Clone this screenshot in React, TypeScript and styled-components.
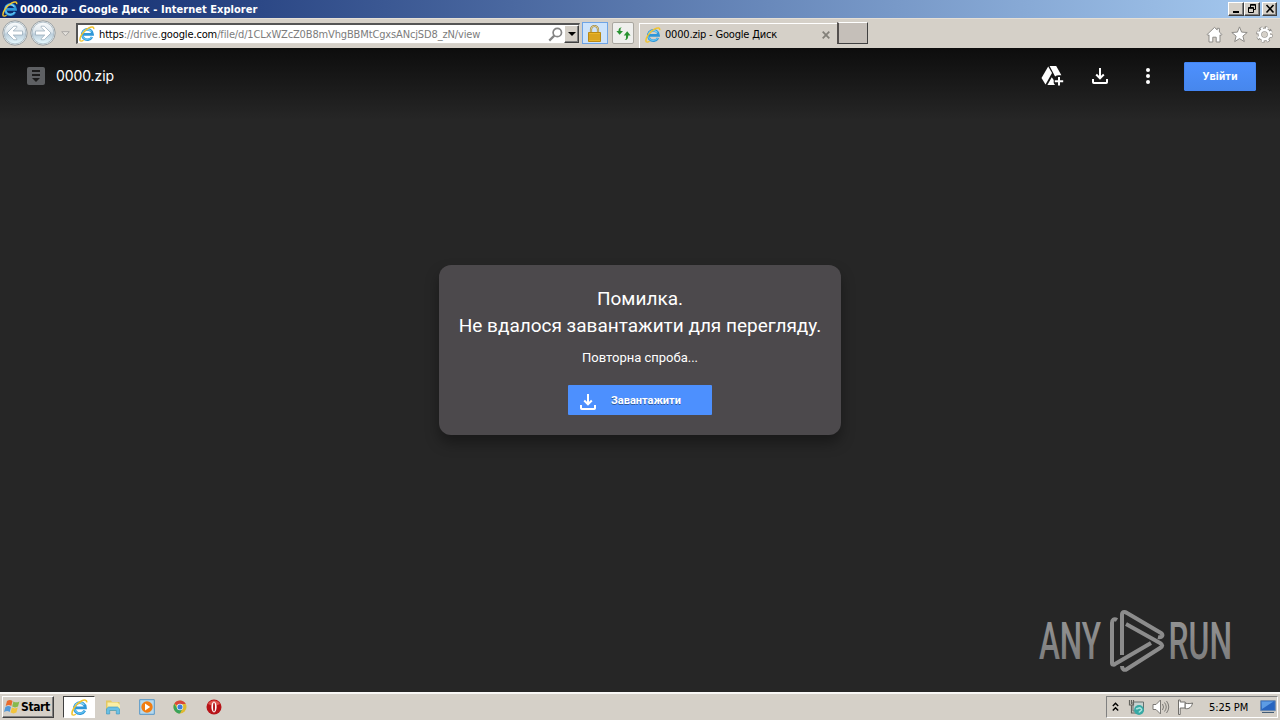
import * as React from 'react';
import styled, { createGlobalStyle, css } from 'styled-components';

const tahoma = `'DejaVu Sans Condensed', 'DejaVu Sans', sans-serif`;

const colors = {
    face: '#d5d0c8',
    white: '#ffffff',
    shadow: '#808080',
    dark: '#404040',
    page: '#262626',
    blue: '#4d90fe',
};

interface IconProps {
    size?: number;
}

const IeIcon = ({ size = 16 }: IconProps) => (
    <Icon width={size} height={size} viewBox="0 0 16 16" fill="none">
        <path d="M13 11a5.2 5.2 0 1 1 .6-2.6H4.5" stroke="#2f97d8" strokeWidth="2.6" />
        <path d="M12.7 11a5 5 0 0 1-9.2-1.6" stroke="#62c3f2" strokeWidth="1.2" />
        <path d="M3.6 7a5 5 0 0 1 8.8-1.4" stroke="#86d6f7" strokeWidth="1.2" />
        <path d="M1.4 15C-.4 12.6 3.8 5 9.8 1.9c3.2-1.6 5.3-1 4.9 1.3" stroke="#f2c42e" strokeWidth="1.5" />
        <path d="M1.4 14.9c.9.4 2 .1 3.2-.6" stroke="#f2c42e" strokeWidth="1.2" />
    </Icon>
);

const DownloadIcon = () => (
    <Icon width="18" height="18" viewBox="0 0 18 18" fill="none" stroke="#fff" strokeWidth="2">
        <path d="M9 1v10M5.2 7.5 9 11.3l3.8-3.8M2 12v3.2c0 .5.3.8.8.8h12.4c.5 0 .8-.3.8-.8V12" />
    </Icon>
);

const ArrowCircle = ({ flip }: { flip?: boolean }) => (
    <Icon width="28" height="28" viewBox="0 0 28 28">
        <defs>
            <linearGradient id={flip ? 'forward' : 'back'} x1="0" y1="0" x2="0" y2="1">
                <stop offset="0" stopColor="#fafcfd" />
                <stop offset=".45" stopColor="#dde6ec" />
                <stop offset=".55" stopColor="#bccedb" />
                <stop offset="1" stopColor="#e7faff" />
            </linearGradient>
        </defs>
        <circle cx="14" cy="14" r="12.2" fill="#eef0ef" stroke="#8e969b" strokeWidth=".9" />
        <circle cx="14" cy="14" r="10.9" fill={`url(#${flip ? 'forward' : 'back'})`} stroke="#a3b5c0" strokeWidth=".8" />
        <g transform={flip ? 'translate(28 0) scale(-1 1)' : undefined}>
            <path d="M6 14l6.8-6.8h3v1.2L12.2 12H21.5v4h-9.3l3.6 3.6v1.2h-3z" fill="#fff" stroke="#93a8b6" strokeWidth=".7" />
        </g>
    </Icon>
);

const DriveIcon = () => (
    <Icon width="24" height="22" viewBox="0 0 24 22" fill="#fff">
        <path d="M8.2 1.5 12 8 5.5 19.5 1.5 13z" />
        <path d="M9.6 1h6.6l5.2 9.2h-2.4a6 6 0 0 0-3.9 1.2z" />
        <path d="m11.8 12.2 1.9 2.9v2.9l1.3 2H7.4z" />
        <path d="M18 12h2v3.2h3.2v2H20v3.2h-2v-3.2h-3.2v-2H18z" />
    </Icon>
);

const WindowButtons = () => (
    <WindowControls>
        <CaptionButton>
            <Icon width="12" height="10" viewBox="0 0 12 10"><path d="M3 7h6v2H3z" /></Icon>
        </CaptionButton>
        <CaptionButton>
            <Icon width="12" height="10" viewBox="0 0 12 10" fill="none" stroke="#000">
                <path d="M4.5 3V.5h5v5H7M4 1.2h6M2.5 3.5h5v5h-5zM2 4.3h6" />
            </Icon>
        </CaptionButton>
        <CaptionButton gap>
            <Icon width="12" height="10" viewBox="0 0 12 10" fill="none" stroke="#000" strokeWidth="1.6">
                <path d="m2.5 1 7 7.5m0-7.5-7 7.5" />
            </Icon>
        </CaptionButton>
    </WindowControls>
);

const BrowserBar = () => (
    <Toolbar>
        <NavButtons>
            <ArrowCircle />
            <ArrowCircle flip />
        </NavButtons>
        <HistoryArrow>
            <Icon width="9" height="6" viewBox="0 0 9 6"><path d="M.7.7h7.6L4.5 4.8z" fill="#e5e2dd" stroke="#aaa8a5" /></Icon>
        </HistoryArrow>
        <AddressBar>
            <IeIcon />
            <Url>
                <b>https</b>://drive.<b>google.com</b>/file/d/1CLxWZcZ0B8mVhgBBMtCgxsANcjSD8_zN/view
            </Url>
            <Icon width="15" height="15" viewBox="0 0 15 15" fill="none" stroke="#858585">
                <circle cx="9.3" cy="5.5" r="4.2" strokeWidth="1.7" /><path d="m6.3 8.6-5 5" strokeWidth="2.2" />
            </Icon>
            <DropButton><Icon width="8" height="4" viewBox="0 0 8 4"><path d="M0 0h8L4 4z" /></Icon></DropButton>
        </AddressBar>
        <LockButton>
            <Icon width="15" height="17" viewBox="0 0 15 17">
                <path d="M4 8V4.5a3.5 3.5 0 0 1 7 0V8" fill="none" stroke="#a28a45" strokeWidth="2.2" />
                <path d="M4 8V4.5a3.5 3.5 0 0 1 7 0V8" fill="none" stroke="#eadca5" strokeWidth=".8" />
                <path d="M1.5 7.5h12v9h-12z" fill="#eab528" stroke="#b98916" />
                <path d="M2 10h11M2 12h11M2 14h11" stroke="#c38e15" strokeWidth=".8" />
            </Icon>
        </LockButton>
        <RefreshButton>
            <Icon width="15" height="15" viewBox="0 0 15 15" fill="#299332">
                <path d="M6 1.5C4.2 1.9 4.6 3 4.5 5H7L3.6 8.8.4 5h2.1C2.4 2.8 3.4 1.2 6 1.5z" />
                <path d="M8.5 14c1.8-.4 1.4-1.5 1.5-3.5V9.5H7.7l3.5-4.2 3.4 4.2h-2.4c.1 2.7-.9 4.8-3.7 4.5z" />
            </Icon>
        </RefreshButton>
        <Tab>
            <IeIcon />
            <TabTitle>0000.zip - Google Диск</TabTitle>
            <Icon width="8" height="8" viewBox="0 0 8 8"><path d="m.7.7 6.6 6.6m0-6.6L.7 7.3" stroke="#838079" strokeWidth="1.8" /></Icon>
        </Tab>
        <NewTab />
        <Tools>
            <Icon width="17" height="17" viewBox="0 0 17 17" fill="#fff" stroke="#8d8b87" strokeWidth="1">
                <path d="m1 8.6 7.5-7.2 2.7 2.5V2.3h2.2v3.8L16 8.6l-1 1-1-.8V16h-3.8v-4.8H6.8V16H3V8.8l-1 .8z" />
            </Icon>
            <Icon width="17" height="17" viewBox="0 0 17 17" fill="#fff" stroke="#8d8b87" strokeWidth="1">
                <path d="m8.5.9 2.1 5.2 5.6.4-4.3 3.6 1.4 5.5-4.8-3-4.8 3 1.4-5.5L.8 6.5l5.6-.4z" />
            </Icon>
            <Icon width="17" height="17" viewBox="0 0 17 17" fill="none">
                <circle cx="8.5" cy="8.5" r="6.6" stroke="#8d8b87" strokeWidth="3.4" strokeDasharray="3.1 2.08" />
                <circle cx="8.5" cy="8.5" r="4.7" stroke="#8d8b87" strokeWidth="4" />
                <circle cx="8.5" cy="8.5" r="6.4" stroke="#fff" strokeWidth="2.6" strokeDasharray="2 3.03" strokeDashoffset="-.55" />
                <circle cx="8.5" cy="8.5" r="4.6" stroke="#fff" strokeWidth="2.7" />
            </Icon>
        </Tools>
    </Toolbar>
);

const Watermark = () => (
    <WatermarkSvg width="200" height="64" viewBox="0 0 200 64">
        <defs>
            <linearGradient id="silver" x1="0" y1="0" x2="0" y2="1">
                <stop offset="0" stopColor="#989898" />
                <stop offset="1" stopColor="#777" />
            </linearGradient>
        </defs>
        <g fill="url(#silver)" fontFamily="Roboto, sans-serif" fontSize="52" fontWeight="500">
            <text x="1" y="50" textLength="62" lengthAdjust="spacingAndGlyphs">ANY</text>
            <text x="130.5" y="50" textLength="63.5" lengthAdjust="spacingAndGlyphs">RUN</text>
        </g>
        <g fill="none" stroke="#8c8c8c" strokeWidth="4" strokeLinejoin="round">
            <path d="M79 11c-3-2-5 0-5 3v40c0 2 2 2 3 1l36-21" />
            <path d="M84 46V6c0-3 2-4 5-2l34 20c3 2 1 5-3 4" />
            <path d="m88 15 34 19c3 2 3 3 0 5L89 60c-3 2-5 0-5-3" />
        </g>
    </WatermarkSvg>
);

const TaskIcons = () => (
    <React.Fragment>
        <TaskButton active><IeIcon size={17} /></TaskButton>
        <TaskButton>
            <Icon width="16" height="16" viewBox="0 0 16 16">
                <path d="M1 1.5h5l1 1.5h7.5v9H1z" fill="#e3c862" /><path d="M2.5 3.5h10l2.5 2.5v5H2.5z" fill="#fbeea5" />
                <path d="M1.5 15V9.8l2-1.8h9l2 1.8V15h-3.2v-3.5H4.7V15z" fill="#69bfe5" stroke="#3995bd" strokeWidth=".6" />
            </Icon>
        </TaskButton>
        <TaskButton>
            <Icon width="16" height="16" viewBox="0 0 16 16">
                <path d="M.7.7h14.6v14.6H.7z" fill="#b6d9ee" stroke="#5597c8" />
                <circle cx="8" cy="8" r="5.7" fill="#f17d12" /><path d="m6 4.4 5.2 3.6L6 11.6z" fill="#fff" />
            </Icon>
        </TaskButton>
        <TaskButton>
            <Icon width="14" height="14" viewBox="0 0 14 14">
                <circle cx="7" cy="7" r="6.5" fill="#e0b92f" />
                <path d="M7 7 1.3 3.8A6.6 6.6 0 0 1 12.8 4H7z" fill="#d8463b" />
                <path d="M1.3 3.8A6.5 6.5 0 0 0 7 13.5L9.5 8.6 4.2 8.5z" fill="#3aa35a" />
                <circle cx="7" cy="7" r="3.2" fill="#e9eef2" /><circle cx="7" cy="7" r="2.5" fill="#3b7fdb" />
            </Icon>
        </TaskButton>
        <TaskButton>
            <Icon width="16" height="16" viewBox="0 0 16 16">
                <circle cx="8" cy="8" r="7.5" fill="#b71318" /><path d="M2 5a7 7 0 0 1 12 0 12 12 0 0 1-12 0" fill="#e0544e" />
                <ellipse cx="8" cy="8" rx="2.6" ry="5.4" fill="#fff" /><ellipse cx="8" cy="8" rx="1" ry="4.5" fill="#b71b20" />
            </Icon>
        </TaskButton>
    </React.Fragment>
);

const SystemTray = () => (
    <Tray>
        <Icon width="7" height="10" viewBox="0 0 7 10" fill="none" stroke="#000" strokeWidth="1.4"><path d="m.8 4 2.7-2.7L6.2 4M.8 8.5l2.7-2.7 2.7 2.7" /></Icon>
        <Icon width="17" height="17" viewBox="0 0 17 17" fill="none">
            <path d="M5 3h10.5v9H5z" fill="#c6d3d1" stroke="#66716f" /><path d="M1.5 1v5h4V1M3.5 1v4M3.5 6v8H8" stroke="#64645f" strokeWidth="1.2" />
            <circle cx="11" cy="11" r="4.9" fill="#37a9a4" /><path d="M8 9.5c2 1 3-2 5 0s-1 2-2 4" stroke="#a9e3de" strokeWidth="1.5" />
        </Icon>
        <Icon width="18" height="16" viewBox="0 0 18 16" fill="none" stroke="#7b7975">
            <path d="M1 5.5h3L8.5 1v14L4 10.5H1z" fill="#fff" /><path d="M10.5 5q2 3 0 6M12.5 3.5q3.5 4.5 0 9M14.5 2q4.5 6 0 12" />
        </Icon>
        <Icon width="17" height="16" viewBox="0 0 17 16" fill="#fff" stroke="#706e6a">
            <path d="M1.5 1v14.5h1.7V9h5V3h-5V1z" /><path d="M8.2 4.2c3 .6 5 .5 7.4-.2-1 4-3.5 6.3-7.4 5.6z" />
        </Icon>
        <Clock>5:25 PM</Clock>
        <Icon width="16" height="14" viewBox="0 0 16 14">
            <path d="M.7.7h14.6v10H.7z" fill="#2765c0" stroke="#6d8aae" /><path d="M1.5 1.5h12L2 9z" fill="#5c9ce4" /><path d="M2 12.5h12" stroke="#435c75" />
        </Icon>
    </Tray>
);

export default function App() {
    return (
        <Desktop>
            <GlobalStyle />
            <TitleBar>
                <IeIcon />
                <WindowTitle>0000.zip - Google Диск - Internet Explorer</WindowTitle>
                <WindowButtons />
            </TitleBar>
            <BrowserBar />
            <Viewer>
                <ViewerHeader>
                    <Icon width="18" height="18" viewBox="0 0 18 18">
                        <rect width="18" height="18" rx="2" fill="#5e6063" />
                        <path d="M5 3h8v2H5zm0 4h8v2H5zm0 4h8L9 15z" fill="#1c1c1c" />
                    </Icon>
                    <FileName>0000.zip</FileName>
                    <Actions>
                        <DriveIcon />
                        <DownloadIcon />
                        <Icon width="6" height="18" viewBox="0 0 6 18" fill="#fff"><circle cx="3" cy="3" r="2" /><circle cx="3" cy="9" r="2" /><circle cx="3" cy="15" r="2" /></Icon>
                    </Actions>
                    <SignIn>Увійти</SignIn>
                </ViewerHeader>
                <ErrorCard>
                    <Heading>Помилка.<br />Не вдалося завантажити для перегляду.</Heading>
                    <Status>Повторна спроба...</Status>
                    <DownloadButton><DownloadIcon /><span>Завантажити</span></DownloadButton>
                </ErrorCard>
                <Watermark />
            </Viewer>
            <Taskbar>
                <StartButton>
                    <Icon width="17" height="16" viewBox="0 0 17 16">
                        <path d="M3 2q3-2 5.5 0L7.3 7Q5 5.2 1.7 7z" fill="#e96b2c" /><path d="M9.4 2.5q3 1.7 6 0L14 7.6q-3 1.6-5.8 0z" fill="#86b94d" />
                        <path d="M1.4 8q3-1.8 5.6 0l-1.3 5Q3.4 11.2 0 13z" fill="#5399d9" /><path d="M7.9 8.6q2.9 1.6 5.8 0l-1.3 5q-3 1.6-5.8 0z" fill="#f2c43d" />
                    </Icon>
                    <StartLabel>Start</StartLabel>
                </StartButton>
                <TaskIcons />
                <SystemTray />
            </Taskbar>
        </Desktop>
    );
}

const GlobalStyle = createGlobalStyle`
    * {
        box-sizing: border-box;
    }

    body {
        margin: 0;
        overflow: hidden;
    }

    button {
        margin: 0;
        padding: 0;
        border: 0;
    }
`;

const raised = css`
    background: ${colors.face};
    border: 1px solid;
    border-color: ${colors.white} ${colors.dark} ${colors.dark} ${colors.white};
    box-shadow: inset -1px -1px ${colors.shadow};
`;

const Icon = styled.svg`
    display: block;
    flex: none;
`;

const Desktop = styled.div`
    width: 1280px;
    height: 720px;
    display: flex;
    flex-direction: column;
    overflow: hidden;
    font-family: ${tahoma};
    font-size: 11px;
`;

const TitleBar = styled.header`
    height: 18px;
    flex: none;
    display: flex;
    align-items: center;
    padding: 0 3px 0 2px;
    background: linear-gradient(90deg, #0d276b, #a6caf0);
`;

const WindowTitle = styled.div`
    flex: 1;
    padding-left: 2px;
    color: #fff;
    font-weight: bold;
    letter-spacing: 0.03px;
    white-space: nowrap;
`;

const WindowControls = styled.div`
    display: flex;
`;

const CaptionButton = styled.button<{ gap?: boolean }>`
    ${raised}
    width: ${props => props.gap ? 15 : 16}px;
    height: 14px;
    margin-left: ${props => props.gap ? 2 : 0}px;
    display: flex;
    align-items: center;
    justify-content: center;
`;

const Toolbar = styled.div`
    height: 30px;
    flex: none;
    display: flex;
    align-items: flex-start;
    padding-top: 4px;
    background: ${colors.face};
    box-shadow: inset 0 1px #e5dfd6;
`;

const NavButtons = styled.div`
    display: flex;
    height: 24px;
    margin: -3px 0 0 1px;
`;

const HistoryArrow = styled.div`
    width: 19px;
    padding: 9px 0 0 4px;
`;

const AddressBar = styled.div`
    width: 504px;
    height: 21px;
    display: flex;
    align-items: center;
    margin-top: 1px;
    padding: 0 0 0 1px;
    background: #fff;
    border: 1px solid #d9d5ce;
    border-top: 2px solid #555;
    border-left: 2px solid #555;
`;

const Url = styled.div`
    flex: 1;
    padding-left: 4px;
    color: #7c7c7c;
    letter-spacing: -0.14px;
    white-space: nowrap;

    b {
        color: #000;
        font-weight: normal;
    }
`;

const DropButton = styled.button`
    ${raised}
    width: 15px;
    height: 18px;
    margin-left: 1px;
    display: flex;
    align-items: center;
    justify-content: center;
`;

const LockButton = styled.button`
    width: 26px;
    height: 22px;
    margin-left: 2px;
    padding-right: 2px;
    display: flex;
    align-items: center;
    justify-content: center;
    background: #cde3fb;
    border: 1px solid #6fa4e5;
`;

const RefreshButton = styled.button`
    width: 22px;
    height: 22px;
    margin-left: 4px;
    display: flex;
    align-items: center;
    justify-content: center;
    background: #efefed;
    border: 1px solid #aaa7a0;
    border-radius: 2px;
`;

const Tab = styled.div`
    width: 198px;
    height: 25px;
    display: flex;
    align-items: center;
    margin: 1px 0 0 5px;
    padding: 0 7px 3px 5px;
    border-top: 1px solid #fff;
    border-left: 1px solid #fff;
`;

const TabTitle = styled.div`
    flex: 1;
    padding-left: 4px;
    letter-spacing: -0.18px;
    white-space: nowrap;
`;

const NewTab = styled.button`
    width: 31px;
    height: 22px;
    background: #c5bfb9;
    border: 1px solid;
    border-width: 1px 1px 1px 2px;
    border-color: #fff #404040 #404040 #54504e;
`;

const Tools = styled.div`
    display: flex;
    gap: 8px;
    margin: 4px 7px 0 auto;
`;

const Viewer = styled.main`
    height: 644px;
    flex: none;
    display: flex;
    flex-direction: column;
    align-items: center;
    position: relative;
    background: linear-gradient(#0d0d0d, ${colors.page} 72px);
`;

const ViewerHeader = styled.div`
    width: 100%;
    height: 56px;
    display: flex;
    align-items: center;
    padding: 0 24px 0 27px;
`;

const FileName = styled.div`
    padding: 0 0 1px 11px;
    color: #fff;
    font: 14px Inter, sans-serif;
    letter-spacing: -0.1px;
`;

const Actions = styled.div`
    display: flex;
    align-items: center;
    gap: 27px;
    margin-left: auto;

    > :last-child {
        margin-left: 9px;
    }
`;

const SignIn = styled.button`
    width: 72px;
    height: 29px;
    margin-left: 33px;
    color: #fff;
    background: linear-gradient(${colors.blue}, #4787ed);
    border: 1px solid #4285f4;
    border-radius: 1px;
    font: bold 11px Roboto, sans-serif;
    letter-spacing: 0.2px;
`;

const ErrorCard = styled.section`
    width: 402px;
    height: 170px;
    display: flex;
    flex-direction: column;
    align-items: center;
    margin-top: 161px;
    padding-top: 20px;
    color: #fff;
    background: #4c494c;
    border-radius: 12px;
    box-shadow: 0 8px 14px rgba(0, 0, 0, 0.35);
    font-family: Roboto, sans-serif;
`;

const Heading = styled.h1`
    margin: 0;
    font-size: 19px;
    font-weight: 400;
    line-height: 27px;
    text-align: center;
    white-space: nowrap;
`;

const Status = styled.div`
    height: 18px;
    margin-top: 10px;
    font-size: 13px;
    line-height: 18px;
`;

const DownloadButton = styled.button`
    width: 144px;
    height: 30px;
    display: flex;
    align-items: center;
    margin-top: 18px;
    padding-left: 11px;
    color: #fff;
    background: ${colors.blue};
    border-radius: 1px;
    font: bold 11px Roboto, sans-serif;
    text-shadow: 0 1px rgba(0, 0, 0, 0.4);

    svg {
        margin: 3px 14px 0 0;
    }
`;

const WatermarkSvg = styled.svg`
    position: absolute;
    right: 42px;
    bottom: 19px;
    overflow: visible;
`;

const Taskbar = styled.footer`
    height: 28px;
    flex: none;
    display: flex;
    align-items: flex-start;
    padding: 4px 2px 0 2px;
    background: ${colors.face};
    box-shadow: inset 0 2px #f8f7f5;
`;

const StartButton = styled.button`
    ${raised}
    width: 52px;
    height: 22px;
    display: flex;
    align-items: center;
    margin-right: 9px;
    padding-left: 1px;
`;

const StartLabel = styled.span`
    font: bold 12px ${tahoma};
    letter-spacing: -0.4px;
`;

const TaskButton = styled.button<{ active?: boolean }>`
    width: 32px;
    height: 22px;
    margin-right: 1.8px;
    display: flex;
    align-items: center;
    justify-content: center;
    background: ${props => props.active ? '#fff' : 'transparent'};
    border: ${props => props.active && '1px solid'};
    border-color: #404040 #fff #fff #404040;
`;

const Tray = styled.div`
    width: 172px;
    height: 22px;
    display: flex;
    align-items: center;
    gap: 7px;
    margin-left: auto;
    padding: 0 1px 0 5px;
    border: 1px solid;
    border-color: #808080 #fff #fff #808080;

    > :nth-child(2) {
        margin-left: 2px;
    }
`;

const Clock = styled.div`
    flex: 1;
    padding-left: 8px;
    letter-spacing: -0.1px;
    white-space: nowrap;
`;
